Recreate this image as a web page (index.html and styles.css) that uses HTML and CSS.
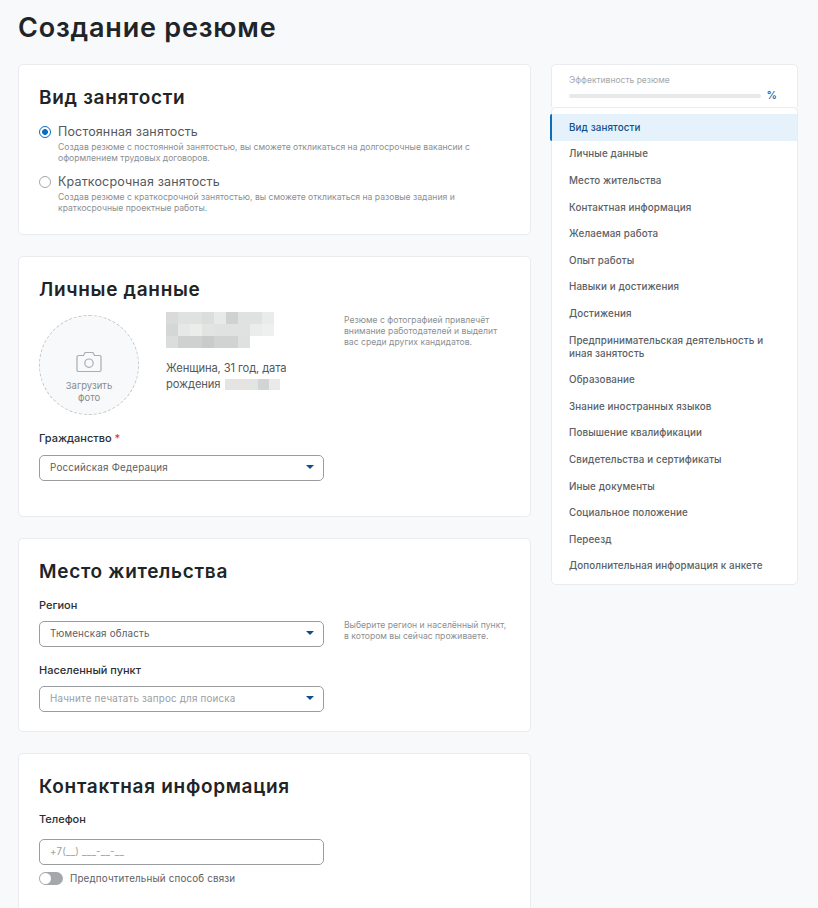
FILE: index.html
```html
<!DOCTYPE html>
<html lang="ru">
<head>
  <meta charset="UTF-8">
  <title>Создание резюме</title>
  <link rel="stylesheet" href="styles.css">
</head>
<body>
  <h1 class="page-title">Создание резюме</h1>

  <div class="layout">
    <main class="main-col">

      <section class="card card-employment">
        <h2>Вид занятости</h2>
        <div class="radio">
          <span class="radio-mark checked"></span>
          <div>
            <div class="radio-label">Постоянная занятость</div>
            <p class="radio-note">Создав резюме с постоянной занятостью, вы сможете откликаться на долгосрочные вакансии с оформлением трудовых договоров.</p>
          </div>
        </div>
        <div class="radio">
          <span class="radio-mark"></span>
          <div>
            <div class="radio-label">Краткосрочная занятость</div>
            <p class="radio-note">Создав резюме с краткосрочной занятостью, вы сможете откликаться на разовые задания и краткосрочные проектные работы.</p>
          </div>
        </div>
      </section>

      <section class="card card-personal">
        <h2>Личные данные</h2>
        <div class="person">
          <div class="photo">
            <svg class="photo-icon" width="26" height="22" viewBox="0 0 26 22" fill="none" stroke="#a9adb0" stroke-width="1.2">
              <path d="M2.5 4.5h5l1.6-3h7.8l1.6 3h5a1.5 1.5 0 0 1 1.5 1.5v13a1.5 1.5 0 0 1-1.5 1.5h-21A1.5 1.5 0 0 1 1 19V6a1.5 1.5 0 0 1 1.5-1.5z"/>
              <circle cx="13" cy="12.2" r="4.2"/>
            </svg>
            <span>Загрузить<br>фото</span>
          </div>
          <div class="person-info">
            <svg class="mosaic" width="108" height="36" viewBox="0 0 9 3" shape-rendering="crispEdges">
              <rect width="9" height="3" fill="#e0e2e1"/>
              <rect x="0" y="0" width="1" height="1" fill="#d9dbda"/>
              <rect x="3" y="0" width="1" height="1" fill="#dcdedd"/>
              <rect x="4" y="0" width="1" height="1" fill="#e8eae8"/>
              <rect x="5" y="0" width="1" height="1" fill="#d0d2d1"/>
              <rect x="8" y="0" width="1" height="1" fill="#eaeceb"/>
              <rect x="0" y="1" width="1" height="1" fill="#d5d7d6"/>
              <rect x="1" y="1" width="1" height="1" fill="#e6e8e7"/>
              <rect x="2" y="1" width="1" height="1" fill="#ebedeb"/>
              <rect x="3" y="1" width="1" height="1" fill="#e2e4e3"/>
              <rect x="7" y="1" width="1" height="1" fill="#ebedec"/>
              <rect x="8" y="1" width="1" height="1" fill="#eeefee"/>
              <rect x="0" y="2" width="1" height="1" fill="#dbdddc"/>
              <rect x="1" y="2" width="2" height="1" fill="#cfd1d0"/>
              <rect x="3" y="2" width="1" height="1" fill="#c8cbca"/>
              <rect x="4" y="2" width="2" height="1" fill="#d1d3d2"/>
              <rect x="6" y="2" width="1" height="1" fill="#dfe1e0"/>
              <rect x="7" y="2" width="2" height="1" fill="#fff"/>
            </svg>
            <div class="person-text">Женщина, 31 год, дата рождения
              <svg class="mosaic-inline" width="55" height="14" viewBox="0 0 5 1" shape-rendering="crispEdges">
                <rect width="5" height="1" fill="#e3e5e4"/>
                <rect x="1" width="1" height="1" fill="#e6e3e1"/>
                <rect x="3" width="1" height="1" fill="#d3d5d4"/>
                <rect x="4" width="1" height="1" fill="#e9ebea"/>
              </svg>
            </div>
          </div>
          <p class="hint hint-photo">Резюме с фотографией привлечёт внимание работодателей и выделит вас среди других кандидатов.</p>
        </div>
        <label class="field-label">Гражданство <span class="req">*</span></label>
        <div class="select">
          <span>Российская Федерация</span>
          <i class="caret"></i>
        </div>
      </section>

      <section class="card card-address">
        <h2>Место жительства</h2>
        <div class="field-row">
          <div class="field-col">
            <label class="field-label">Регион</label>
            <div class="select tight">
              <span>Тюменская область</span>
              <i class="caret"></i>
            </div>
            <label class="field-label label-next">Населенный пункт</label>
            <div class="select tight placeholder">
              <span>Начните печатать запрос для поиска</span>
              <i class="caret"></i>
            </div>
          </div>
          <p class="hint hint-region">Выберите регион и населённый пункт, в котором вы сейчас проживаете.</p>
        </div>
      </section>

      <section class="card card-contacts">
        <h2>Контактная информация</h2>
        <label class="field-label label-phone">Телефон</label>
        <div class="select placeholder phone">
          <span>+7(__) ___-__-__</span>
        </div>
        <div class="switch-row">
          <span class="switch"></span>
          <span>Предпочтительный способ связи</span>
        </div>
      </section>

    </main>

    <aside class="side-col">
      <div class="score">
        <div class="score-title">Эффективность резюме</div>
        <div class="score-row">
          <div class="score-bar"></div>
          <span class="score-value">%</span>
        </div>
      </div>
      <nav class="menu">
        <a class="active">Вид занятости</a>
        <a>Личные данные</a>
        <a>Место жительства</a>
        <a>Контактная информация</a>
        <a>Желаемая работа</a>
        <a>Опыт работы</a>
        <a>Навыки и достижения</a>
        <a>Достижения</a>
        <a>Предпринимательская деятельность и иная занятость</a>
        <a>Образование</a>
        <a>Знание иностранных языков</a>
        <a>Повышение квалификации</a>
        <a>Свидетельства и сертификаты</a>
        <a>Иные документы</a>
        <a>Социальное положение</a>
        <a>Переезд</a>
        <a>Дополнительная информация к анкете</a>
      </nav>
    </aside>
  </div>
</body>
</html>
```

FILE: styles.css
```css
html, body {
  height: 908px;
  overflow: hidden;
}

body {
  margin: 0;
  padding: 0 20px 0 18px;
  background: #f8f9fb;
  color: #1f2427;
  font-family: Inter, "Noto Sans", sans-serif;
}

.page-title {
  margin: 0;
  padding-top: 12px;
  height: 64px;
  box-sizing: border-box;
  font-size: 27px;
  line-height: 32px;
  font-weight: 600;
  letter-spacing: 0.8px;
}

.layout {
  display: flex;
  gap: 20px;
  align-items: flex-start;
}

.main-col {
  width: 513px;
  flex: none;
}

.side-col {
  width: 247px;
  flex: none;
}

.card {
  box-sizing: border-box;
  background: #fff;
  border: 1px solid #e9ebee;
  border-radius: 5px;
  padding: 21px 20px 0;
  margin-bottom: 21px;
}

.card h2 {
  margin: 0;
  font-size: 19px;
  line-height: 23px;
  font-weight: 600;
  letter-spacing: 0.7px;
}

.card-employment { height: 171px; }
.card-personal { height: 261px; }
.card-address { height: 194px; }
.card-contacts { height: 200px; }

/* radio */
.radio {
  display: flex;
  gap: 7px;
  margin-top: 15px;
}

.radio + .radio {
  margin-top: 10px;
}

.radio-mark {
  box-sizing: border-box;
  flex: none;
  width: 12px;
  height: 12px;
  margin-top: 2px;
  border: 1px solid #a4a7ab;
  border-radius: 50%;
  background: #fff;
}

.radio-mark.checked {
  border: 1.5px solid #0b6cc0;
  background: radial-gradient(circle, #0b6cc0 0 2.6px, #fff 3.2px);
}

.radio-label {
  font-size: 12.5px;
  line-height: 16px;
  letter-spacing: 0.15px;
  color: #54595d;
}

.radio-note {
  margin: 2px 0 0;
  font-size: 8.6px;
  line-height: 11px;
  color: #8b8f93;
}

/* personal */
.person {
  display: flex;
  margin-top: 11px;
  height: 119px;
}

.photo {
  box-sizing: border-box;
  flex: none;
  width: 100px;
  height: 100px;
  margin-top: 3px;
  border: 1px dashed #c6c9cc;
  border-radius: 50%;
  background: #f8f9fa;
  display: flex;
  flex-direction: column;
  align-items: center;
  padding-top: 35px;
  font-size: 9.5px;
  line-height: 11.5px;
  text-align: center;
  color: #878b8f;
}

.photo-icon {
  margin-bottom: 7px;
}

.person-info {
  width: 136px;
  margin-left: 27px;
  flex: none;
}

.mosaic {
  display: block;
}

.person-text {
  margin-top: 12px;
  font-size: 11.2px;
  line-height: 16px;
  letter-spacing: -0.12px;
  color: #54595d;
}

.mosaic-inline {
  margin-left: 2px;
  vertical-align: -3px;
}

.hint {
  margin: 0;
  font-size: 8.6px;
  line-height: 11px;
  color: #8b8f93;
}

.hint-photo {
  width: 165px;
  margin: 2.5px 0 0 42px;
}

/* fields */
.field-label {
  display: block;
  font-size: 11px;
  line-height: 14px;
  font-weight: 500;
  color: #2a2f33;
}

.label-next {
  margin-top: 16px;
}

.label-phone {
  margin-top: 14px;
}

.req {
  color: #e0314a;
}

.select {
  box-sizing: border-box;
  width: 285px;
  height: 26px;
  margin-top: 10px;
  padding: 0 9px 2px 10px;
  border: 1px solid #9a9da0;
  border-radius: 5px;
  background: #fff;
  display: flex;
  align-items: center;
  justify-content: space-between;
  font-size: 9.8px;
  letter-spacing: 0.2px;
  color: #5c6064;
}

.select.tight {
  margin-top: 9px;
}

.select.placeholder {
  color: #9b9ea2;
}

.caret {
  width: 0;
  height: 0;
  border-left: 4px solid transparent;
  border-right: 4px solid transparent;
  border-top: 4px solid #0b4f8f;
}

.field-row {
  display: flex;
  margin-top: 15px;
}

.field-col {
  width: 285px;
  flex: none;
}

.hint-region {
  margin: 22px 0 0 20px;
  width: 166px;
}

.phone {
  margin-top: 13px;
}

.switch-row {
  display: flex;
  align-items: center;
  gap: 7px;
  margin-top: 6.5px;
  font-size: 9.8px;
  letter-spacing: 0.17px;
  color: #5c6064;
}

.switch {
  position: relative;
  width: 24px;
  height: 13px;
  border-radius: 7px;
  background: #a4a7ab;
}

.switch::before {
  content: "";
  position: absolute;
  left: 1px;
  top: 1px;
  width: 11px;
  height: 11px;
  border-radius: 50%;
  background: #fff;
}

/* sidebar */
.score {
  box-sizing: border-box;
  height: 43px;
  background: #fff;
  border: 1px solid #e9ebee;
  border-bottom: none;
  border-radius: 5px 5px 0 0;
  padding: 9px 20px 0 17px;
}

.score-title {
  font-size: 8.5px;
  line-height: 12px;
  color: #a5a8ab;
}

.score-row {
  display: flex;
  align-items: center;
  gap: 6px;
  margin-top: 3px;
}

.score-bar {
  flex: 1;
  height: 4px;
  border-radius: 2px;
  background: #e8e9ea;
}

.score-value {
  font-size: 10.5px;
  line-height: 13px;
  font-weight: 500;
  color: #0b5ea8;
}

.menu {
  position: relative;
  background: #fff;
  border: 1px solid #e9ebee;
  border-radius: 5px;
  padding: 6px 0 5px;
}

.menu a {
  display: block;
  padding: 6.8px 30px 6.8px 17px;
  font-size: 9.8px;
  line-height: 13px;
  letter-spacing: 0.12px;
  font-weight: 500;
  color: #5b6064;
}

.menu a.active {
  margin-left: -2px;
  border-left: 2px solid #0b6cc0;
  border-radius: 2px 0 0 2px;
  background: #e6f2fb;
  color: #0b4f8f;
}
```
